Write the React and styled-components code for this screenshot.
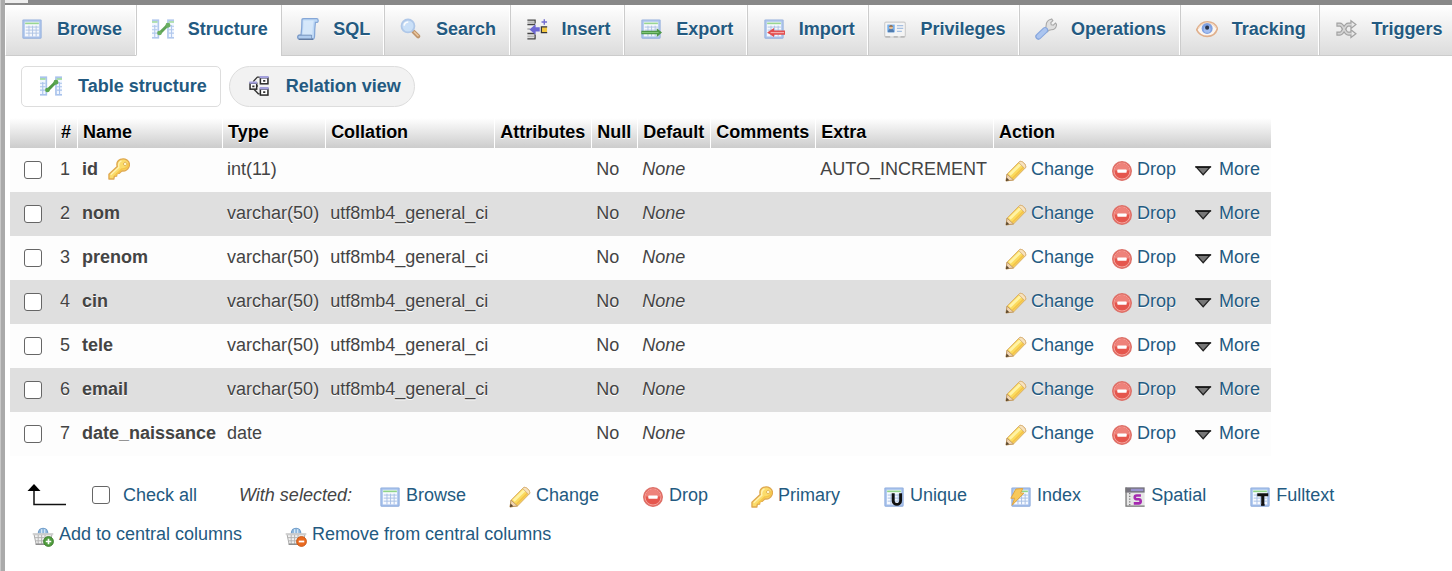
import React from "react";
import styled, { createGlobalStyle, css } from "styled-components";

const GlobalStyle = createGlobalStyle`
  *, *::before, *::after { box-sizing: border-box; }
  body {
    margin: 0;
    background: #fff;
    color: #444;
    font-family: "Liberation Sans", Arial, Helvetica, sans-serif;
    font-size: 18px;
    line-height: 22px;
  }
`;

/* ---------- icons, all drawn on a 16 unit grid ---------- */

const Svg = styled.svg`
  display: block;
  flex: none;
  width: 22px;
  height: 22px;
  opacity: ${(p) => (p.$soft ? 0.9 : 1)};
`;

const Sheet = () => (
  <>
    <rect x="1" y="1" width="14" height="14" rx="0.8" fill="#8aa9dc" />
    <rect x="1.7" y="1.7" width="12.6" height="12.6" fill="#a9c3ee" />
    <rect x="2.8" y="2.8" width="10.4" height="10.6" fill="#f7faff" />
    <rect x="3" y="3.3" width="10" height="1.200" fill="#8fd488" />
    <path d="M3.400 6.600h9.600M3.400 8.800h9.600M3.400 11h9.600" stroke="#a9c0e4" strokeWidth="0.7" />
    <path d="M5.800 5.600v7.800M8.400 5.600v7.800M11 5.600v7.800" stroke="#a9c0e4" strokeWidth="0.7" />
  </>
);

const drawings = {
  browse: <Sheet />,
  structure: (
    <>
      <path d="M0 1h5.2v14H0z" fill="#a9c3ec" />
      <path d="M0 2.4h4v11.4H0z" fill="#f2f7ff" />
      <path d="M0 2.4h4v1H0z" fill="#8fd488" />
      <path d="M0 6h4M0 8.5h4M0 11h4M2 5v9" stroke="#a9c3ec" strokeWidth="0.8" />
      <path d="M11 1h5v14h-5z" fill="#a9c3ec" />
      <path d="M12.2 2.4H16v11.4h-3.8z" fill="#f2f7ff" />
      <path d="M12.2 2.4H16v1h-3.8z" fill="#8fd488" />
      <path d="M12.2 6H16M12.2 8.5H16M12.2 11H16M14.2 5v9" stroke="#a9c3ec" strokeWidth="0.8" />
      <path d="M5.600 11L11 5.600" stroke="#4e9a44" strokeWidth="2.200" />
      <circle cx="5.400" cy="10.900" r="1.700" fill="#5aa650" />
      <circle cx="11.600" cy="5.200" r="1.800" fill="#5aa650" />
    </>
  ),
  sql: (
    <>
      <path d="M3.6 1.2C3.6.5 4.2.5 5 .5h9.400c1.200 0 1.400 2.600.2 2.600h-1.200c-.4 3.400-.6 7-.6 9.400 0 1.800-.6 3-1.600 3H1.600C.2 15.500.2 12.500 1.400 12.400H2.900C3.400 8.600 3.600 5 3.600 1.200z" fill="#b9d6f7" stroke="#7a9fd4" strokeWidth="0.9" />
      <path d="M4.600 1.800h7.600c-.7 3-.9 7-1 10.400H4C4.600 8.400 4.800 5 4.600 1.800z" fill="#d3e7fc" />
      <path d="M1.200 12.500h9.400c-.2 1.400 0 2.600.8 3H1.700c-1.200 0-1.300-2.500-.5-3z" fill="#a9c9f0" stroke="#5d7fb0" strokeWidth="0.6" />
      <path d="M1.400 15.400h10.300" stroke="#4d678f" strokeWidth="0.8" />
    </>
  ),
  search: (
    <>
      <path d="M9.800 9.900l3.400 3.400" stroke="#b98a5e" strokeWidth="3" strokeLinecap="round" />
      <path d="M10.400 10.200l2.700 2.700" stroke="#edc596" strokeWidth="1.200" strokeLinecap="round" />
      <circle cx="5.800" cy="5.800" r="4.700" fill="#c6dff9" stroke="#a9c4e8" strokeWidth="1.300" />
      <path d="M3 5.600c.2-1.600 1.400-2.600 3-2.700" stroke="#fff" strokeWidth="1.200" fill="none" />
    </>
  ),
  insert: (
    <>
      <path d="M1 1.500h6M1 4.700h5.500M1 11.300h5.500M1 15.200h6M6.600 1v3M6.600 12v3" stroke="#333" strokeWidth="1" fill="none" />
      <path d="M1 3h5M1 13.300h5M1 8h2" stroke="#b5b5b5" strokeWidth="1.300" />
      <path d="M2.500 8.300L7 4.500v2.300h3v3H7v2.400z" fill="#5f59d0" />
      <path d="M13.300.9v4M11.300 2.900h4" stroke="#6660cc" strokeWidth="1" />
      <path d="M11.300 6.600h4v4h-4z" fill="#f4c430" />
      <path d="M15.400 6.500h-4.200v4.200h4.200" stroke="#222" strokeWidth="0.9" fill="none" />
    </>
  ),
  export: (
    <>
      <Sheet />
      <path d="M1 9.300h11.200V7.400l3.800 3.200-3.800 3.200v-1.900H1z" fill="#3d8f35" />
      <path d="M1.500 10.600h12" stroke="#7cc873" strokeWidth="0.700" />
    </>
  ),
  import: (
    <>
      <Sheet />
      <path d="M16 9.100H8V7.300l-5 3.300 5 3.300v-1.800h8z" fill="#e23a3a" />
      <path d="M5.500 10.600h9.800" stroke="#f7a3a3" strokeWidth="0.900" />
    </>
  ),
  privileges: (
    <>
      <rect x="0.500" y="3" width="15" height="10.800" rx="1" fill="#f6f6f6" stroke="#c9c9c9" strokeWidth="0.800" />
      <path d="M1 13.800h3.500M7 13.800h3M12 13.800h3" stroke="#a9a9a9" strokeWidth="0.900" />
      <rect x="2.400" y="4.800" width="5.400" height="5.600" fill="#6aa9ea" />
      <path d="M2.900 10.400c0-2 1-2.600 2.200-2.600s2.200.6 2.200 2.600z" fill="#3f6fa8" />
      <circle cx="5.100" cy="6.800" r="1.400" fill="#e8b98a" />
      <path d="M3.600 6.400c.2-1.600 2.800-1.600 3 0z" fill="#7a5330" />
      <path d="M9.400 5.500h4.600M9.400 7.600h4.600M9.400 9.700h3.600" stroke="#9fbbe0" strokeWidth="0.900" />
    </>
  ),
  operations: (
    <>
      <path d="M7.200 8.800C7.800 7.900 8 7 8.100 5.500c0-2.200 1.500-4.300 4-4.800L13 1.900l-1.500 1.500.3 1.600 1.500.2 1.600-1.500.8 1c-.2 2.200-1.700 3.700-3.800 3.900-1.300.1-2.200.6-3 1.400z" fill="#dedede" stroke="#a0a0a0" strokeWidth="0.800" />
      <path d="M2.500 13.500L7.300 8.900" stroke="#7da0dc" strokeWidth="4.600" strokeLinecap="round" />
      <path d="M2.600 13.400L7.300 8.900" stroke="#a5c1f0" strokeWidth="3" strokeLinecap="round" />
    </>
  ),
  tracking: (
    <>
      <path d="M.5 8.600C2.400 4.400 5.200 2.700 8.300 2.700c3.600 0 6.200 2 7.300 5-1 3.600-3.800 5.700-7.400 5.700C4.800 13.400 2 11.800.5 8.600z" fill="#fdf7f2" stroke="#dfa981" strokeWidth="1.200" />
      <path d="M1.600 7.600C3.800 4 6 3.600 8.300 3.600c2.800 0 5 1.200 6.400 3.600" stroke="#f1d2b9" strokeWidth="0.800" fill="none" />
      <circle cx="8.100" cy="7.600" r="4" fill="#7398e0" />
      <circle cx="8.100" cy="8.300" r="2.500" fill="#9dbbf2" />
      <circle cx="8.100" cy="7" r="1.500" fill="#16213a" />
    </>
  ),
  triggers: (
    <>
      <g fill="none" stroke="#9a9a9a" strokeWidth="3">
        <path d="M1 4.800h2.600c2.700 0 3.300 6.600 6 6.600h2.600" />
        <path d="M1 11.400h2.600c2.700 0 3.300-6.600 6-6.600h2.600" />
      </g>
      <path d="M11.600 2l3.600 2.800-3.600 2.800zM11.600 8.600l3.600 2.800-3.600 2.800z" fill="#eee" stroke="#9a9a9a" strokeWidth="0.900" />
      <g fill="none" stroke="#d2d2d2" strokeWidth="1.200">
        <path d="M1.800 4.800h1.800c2.700 0 3.300 6.600 6 6.600h3" />
        <path d="M1.800 11.400h1.800c2.700 0 3.300-6.600 6-6.600h3" />
      </g>
    </>
  ),
  relation: (
    <>
      <path d="M3.800 4.800L6.800 1.500h1.700M6 8h1.200M4.500 10.500l3 3.200h1" stroke="#333" strokeWidth="1" fill="none" />
      <g fill="#fff" stroke="#2b2b2b" strokeWidth="1.100">
        <rect x="1.500" y="6" width="4.800" height="4.300" />
        <rect x="9" y="2" width="5.500" height="4.400" />
        <rect x="9" y="10.200" width="5.500" height="4.400" />
      </g>
      <path d="M1 4.800h5.600v1.500H1zM8.500.7H15v1.700H8.500zM8.500 8.800H15v1.700H8.500z" fill="#a3a0dc" />
      <path d="M3.100 8.300h1.600M11 4.300h1.600M11 12.500h1.600" stroke="#333" strokeWidth="1.200" />
    </>
  ),
  key: (
    <>
      <path d="M.7 15.300v-3.500l6-5.700c-.7-2.800.3-4.300 2.300-5.100C10.800.3 12.200.4 13.800 1.500c1.900 1.400 2.200 3 1.400 5-1 2.200-2.800 3.200-5.200 2.900L8 11.200l-1.700.2v1.700l-1.700.2-.4 2z" fill="#fbdc6b" stroke="#dfa850" strokeWidth="1" strokeLinejoin="round" />
      <path d="M2 12.200l5.900-5.500C7.300 4 8.200 2.800 9.800 2.100" stroke="#fff2b0" strokeWidth="1" fill="none" />
      <path d="M5 13l5-5c3 .3 5-1.500 4.800-4" stroke="#f5c54a" strokeWidth="1.200" fill="none" />
      <path d="M11.200 4.600c0-1.600 2-2 2.500-.6.200 1.200-.8 1.800-1.700 1.500z" fill="#fff6cc" stroke="#dca848" strokeWidth="0.700" />
    </>
  ),
  pencil: (
    <>
      <path d="M.8 15.200L1.500 10.300 10.400 1.300c1.600-1.400 5.600 2.200 4.500 4.300L6.200 14.500z" fill="#fbdb5e" stroke="#d6ab66" strokeWidth="0.700" strokeLinejoin="round" />
      <path d="M3.400 10.800L12 2.300" stroke="#fff3a6" strokeWidth="2" />
      <path d="M5.400 13.400l8.900-8.900" stroke="#f3c24a" strokeWidth="1.200" />
      <path d="M9.900 1.800l.5-.5c1.600-1.400 5.600 2.200 4.500 4.300l-.6.600z" fill="#f8e3bd" stroke="#d3ab74" strokeWidth="0.600" />
      <path d="M.8 15.200L1.500 10.300l4.700 4.200z" fill="#f1d5b2" stroke="#b8905c" strokeWidth="0.600" />
      <path d="M.6 15.400l.5-2.600 2.100 1.900z" fill="#5d4930" />
    </>
  ),
  drop: (
    <>
      <circle cx="8" cy="8" r="6.800" fill="#e8635a" stroke="#dc7169" strokeWidth="0.900" />
      <circle cx="8" cy="8" r="5.800" fill="#e5564d" stroke="#f4a79f" strokeWidth="0.700" />
      <path d="M2.600 7.600a5.400 5.200 0 0 1 10.800 0z" fill="#ee827a" />
      <rect x="4.600" y="6.900" width="6.800" height="2.300" rx="0.500" fill="#fff" />
    </>
  ),
  more: (
    <>
      <path d="M2.600 5.400h9.600L7.400 10.700z" fill="#777" stroke="#222" strokeWidth="0.900" />
      <path d="M1.600 5h11.600" stroke="#111" strokeWidth="1" />
    </>
  ),
  unique: (
    <>
      <Sheet />
      <path d="M7.400 5.300v5.400c0 3.600 5.400 3.600 5.400 0V5.300" fill="none" stroke="#111" strokeWidth="2.100" />
    </>
  ),
  index: (
    <>
      <Sheet />
      <path d="M4.300 2.200l5-.4-1.600 3.400h2.400L1.500 14l1.900-5.100H.6z" fill="#f8c95a" stroke="#e0a23c" strokeWidth="0.700" />
    </>
  ),
  spatial: (
    <>
      <rect x="1" y="1" width="14" height="14" fill="#e6e6e6" />
      <path d="M1 1h14v3.800H1z" fill="#77747f" />
      <path d="M5 2h9v1.700H5z" fill="#9a92cf" />
      <path d="M1.500 1v14M1 14.700h14" stroke="#777" strokeWidth="0.900" />
      <path d="M4.200 5v9" stroke="#666" strokeWidth="0.800" strokeDasharray="1 1" />
      <path d="M12.300 6.900H9.100c-1.700 0-1.700 2.700 0 2.700h1.700c1.800 0 1.800 3 0 3H7.100" fill="none" stroke="#a52ab0" strokeWidth="1.900" />
    </>
  ),
  fulltext: (
    <>
      <Sheet />
      <path d="M6 6.400h8M10 6.400v7.800" stroke="#111" strokeWidth="2.200" fill="none" />
      <path d="M8.700 13.800h2.700" stroke="#111" strokeWidth="1" />
    </>
  ),
  basketAdd: (
    <>
      <Basket />
      <circle cx="12" cy="12" r="3.600" fill="#4f9c3d" stroke="#39792b" strokeWidth="0.600" />
      <path d="M12 10v4M10 12h4" stroke="#fff" strokeWidth="1.200" />
    </>
  ),
  basketRemove: (
    <>
      <Basket />
      <circle cx="12" cy="12" r="3.600" fill="#ea6a20" stroke="#c4500f" strokeWidth="0.600" />
      <path d="M10 12h4" stroke="#fff" strokeWidth="1.300" />
    </>
  ),
};

function Basket() {
  return (
    <>
      <path d="M4.500 6.500C4.800 1 11.300 1 11.600 6.500z" fill="#8fb8de" stroke="#6f9cc9" strokeWidth="0.800" />
      <path d="M7 6V3M9.200 6V3" stroke="#d6e8f7" strokeWidth="0.900" />
      <path d="M1.500 7h13l-1.400 7H3z" fill="#f1f1f1" stroke="#a8a8a8" strokeWidth="0.700" />
      <path d="M2 9.200h12M2.500 11.500h11M4.500 7v7M7 7v7M9.500 7v7" stroke="#b2b2b2" strokeWidth="0.700" />
      <path d="M.5 5.900h15v1.300H.5z" fill="#cfcfcf" />
      <path d="M2.600 14h8" stroke="#8b8b8b" strokeWidth="1" />
    </>
  );
}

const Icon = ({ name, soft }) => (
  <Svg viewBox="0 0 16 16" aria-hidden="true" $soft={soft}>
    {drawings[name]}
  </Svg>
);

/* ---------- page frame ---------- */

const Page = styled.div`
  min-height: 100vh;
  border-left: 1px solid #c8c8c8;
  overflow: hidden;
`;

const Frame = styled.div`
  min-height: 100vh;
  border-left: 4px solid #aaa;
`;

const TopStrip = styled.div`
  height: 5px;
  background: #888;

  &::before {
    content: "";
    display: block;
    width: 23px;
    height: 3px;
    background: #eee;
  }
`;

const linkText = css`
  color: #235a81;
  text-decoration: none;
  white-space: nowrap;
`;

/* ---------- tabs ---------- */

/* The row of tabs runs slightly past the right edge of the window. */
const TabBar = styled.nav`
  display: flex;
  margin-right: -4px;
`;

const Tab = styled.a`
  ${linkText}
  flex: 1 0 auto;
  display: flex;
  align-items: center;
  gap: 14px;
  padding: 13px 12px 15px 15px;
  border: solid #ccc;
  border-width: 0 0 1px 1px;
  background: linear-gradient(#fff, #dcdcdc);
  box-shadow: inset -1px 0 #fff;
  font-weight: bold;
  text-shadow: 0 1px 0 #fff;

  &:first-child {
    border-left-color: #fff;
  }

  ${(p) =>
    p.$active &&
    css`
      background: #fff;
      border-bottom-color: #fff;
    `}
`;

const SubTabs = styled.nav`
  display: flex;
  gap: 8px;
  padding: 10px 16px 11px;
`;

const SubTab = styled.a`
  ${linkText}
  display: flex;
  align-items: center;
  gap: 16px;
  height: 41px;
  padding: 0 13px 2px 18px;
  border: 1px solid #ddd;
  border-radius: ${(p) => (p.$active ? "5px" : "21px")};
  background: ${(p) => (p.$active ? "#fff" : "#f2f2f2")};
  font-weight: bold;
`;

/* ---------- columns table ---------- */

const Table = styled.table`
  margin-left: 5px;
  border-collapse: separate;
  border-spacing: 0;
  white-space: nowrap;
  text-shadow: 0 1px 0 #fff;
`;

const Th = styled.th`
  height: 30px;
  padding: 0 6px 2px 5px;
  border-left: 1px solid #fff;
  background: linear-gradient(#fff, #ccc);
  color: #000;
  text-align: left;

  &:first-child {
    border-left: 0;
  }
`;

const Tr = styled.tr`
  background: ${(p) => (p.$shaded ? "#dfdfdf" : "#fdfdfd")};
`;

const Td = styled.td`
  height: 44px;
  padding: ${(p) => (p.$wide ? "0 11px 2px 12px" : "0 6px 2px 5px")};
`;

const Name = styled.label`
  display: flex;
  align-items: center;
  gap: 10px;
  font-weight: bold;
`;

const CheckBox = styled.input`
  appearance: none;
  display: block;
  flex: none;
  width: 18px;
  height: 18px;
  margin: 0;
  border: 1px solid #666;
  border-radius: 3px;
  background: #fff;

  &:checked {
    background: #235a81;
  }
`;

const CheckCell = styled(Td)`
  padding: 0 13px 0 14px;
`;

const Actions = styled.div`
  display: flex;
  gap: 17px;
`;

const iconBelowText = css`
  ${Svg} {
    margin: 2px 0 -2px;
  }
`;

const Action = styled.a`
  ${linkText}
  ${iconBelowText}
  display: flex;
  align-items: center;
  gap: 4px;
`;

/* ---------- bulk actions ---------- */

const BulkForm = styled.form`
  display: grid;
  gap: 17px;
  padding: 28px 20px 24px 22px;
`;

const BulkRow = styled.div`
  display: flex;
  flex-wrap: wrap;
  align-items: center;
  column-gap: 43px;
  row-gap: 17px;
  padding-left: ${(p) => (p.$indent ? "5px" : "0")};
`;

const Selection = styled.div`
  display: flex;
  align-items: center;
  margin-right: -16px;
`;

const Arrow = styled.svg`
  flex: none;
  width: 40px;
  height: 22px;
`;

const CheckAll = styled.label`
  ${linkText}
  display: flex;
  align-items: center;
  gap: 13px;
  margin: 0 42px 0 25px;
`;

const BulkButton = styled.button`
  ${linkText}
  ${iconBelowText}
  display: flex;
  align-items: center;
  gap: 5px;
  padding: 0;
  border: 0;
  background: none;
  font: inherit;
  cursor: pointer;
`;

/* ---------- data ---------- */

const tabs = [
  ["browse", "Browse"],
  ["structure", "Structure"],
  ["sql", "SQL"],
  ["search", "Search"],
  ["insert", "Insert"],
  ["export", "Export"],
  ["import", "Import"],
  ["privileges", "Privileges"],
  ["operations", "Operations"],
  ["tracking", "Tracking"],
  ["triggers", "Triggers"],
];

const headings = ["", "#", "Name", "Type", "Collation", "Attributes", "Null", "Default", "Comments", "Extra", "Action"];

const text = "utf8mb4_general_ci";
const columns = [
  { name: "id", type: "int(11)", extra: "AUTO_INCREMENT", primary: true },
  { name: "nom", type: "varchar(50)", collation: text },
  { name: "prenom", type: "varchar(50)", collation: text },
  { name: "cin", type: "varchar(50)", collation: text },
  { name: "tele", type: "varchar(50)", collation: text },
  { name: "email", type: "varchar(50)", collation: text },
  { name: "date_naissance", type: "date" },
];

const rowActions = [
  ["pencil", "Change"],
  ["drop", "Drop"],
  ["more", "More"],
];

const bulkActions = [
  ["browse", "Browse"],
  ["pencil", "Change"],
  ["drop", "Drop"],
  ["key", "Primary"],
  ["unique", "Unique"],
  ["index", "Index"],
  ["spatial", "Spatial"],
  ["fulltext", "Fulltext"],
];

const centralActions = [
  ["basketAdd", "Add to central columns"],
  ["basketRemove", "Remove from central columns"],
];

export default function App() {
  return (
    <Page>
      <GlobalStyle />
      <Frame>
        <TopStrip />
        <TabBar>
          {tabs.map(([icon, label]) => (
            <Tab key={label} href="#" $active={label === "Structure"}>
              <Icon name={icon} soft />
              {label}
            </Tab>
          ))}
        </TabBar>
        <SubTabs>
          <SubTab href="#" $active>
            <Icon name="structure" />
            Table structure
          </SubTab>
          <SubTab href="#">
            <Icon name="relation" />
            Relation view
          </SubTab>
        </SubTabs>

        <Table>
          <thead>
            <tr>
              {headings.map((h, i) => (
                <Th key={i} scope="col">{h}</Th>
              ))}
            </tr>
          </thead>
          <tbody>
            {columns.map((c, i) => (
              <Tr key={c.name} $shaded={i % 2 === 1}>
                <CheckCell>
                  <CheckBox type="checkbox" id={`col-${c.name}`} />
                </CheckCell>
                <Td>{i + 1}</Td>
                <Td>
                  <Name htmlFor={`col-${c.name}`}>
                    {c.name}
                    {c.primary && <Icon name="key" />}
                  </Name>
                </Td>
                <Td>{c.type}</Td>
                <Td>{c.collation}</Td>
                <Td />
                <Td>No</Td>
                <Td><i>None</i></Td>
                <Td />
                <Td>{c.extra}</Td>
                <Td $wide>
                  <Actions>
                    {rowActions.map(([icon, label]) => (
                      <Action key={label} href="#">
                        <Icon name={icon} />
                        {label}
                      </Action>
                    ))}
                  </Actions>
                </Td>
              </Tr>
            ))}
          </tbody>
        </Table>

        <BulkForm onSubmit={(e) => e.preventDefault()}>
          <BulkRow>
            <Selection>
              <Arrow viewBox="0 0 40 22" aria-hidden="true">
                <path d="M7 5v15.500h32" fill="none" stroke="#111" strokeWidth="1.500" />
                <path d="M0.500 7L7 0l6.500 7z" fill="#000" />
              </Arrow>
              <CheckAll>
                <CheckBox type="checkbox" />
                Check all
              </CheckAll>
              <i>With selected:</i>
            </Selection>
            {bulkActions.map(([icon, label]) => (
              <BulkButton key={label} type="submit">
                <Icon name={icon} />
                {label}
              </BulkButton>
            ))}
          </BulkRow>
          <BulkRow $indent>
            {centralActions.map(([icon, label]) => (
              <BulkButton key={label} type="submit">
                <Icon name={icon} />
                {label}
              </BulkButton>
            ))}
          </BulkRow>
        </BulkForm>
      </Frame>
    </Page>
  );
}
